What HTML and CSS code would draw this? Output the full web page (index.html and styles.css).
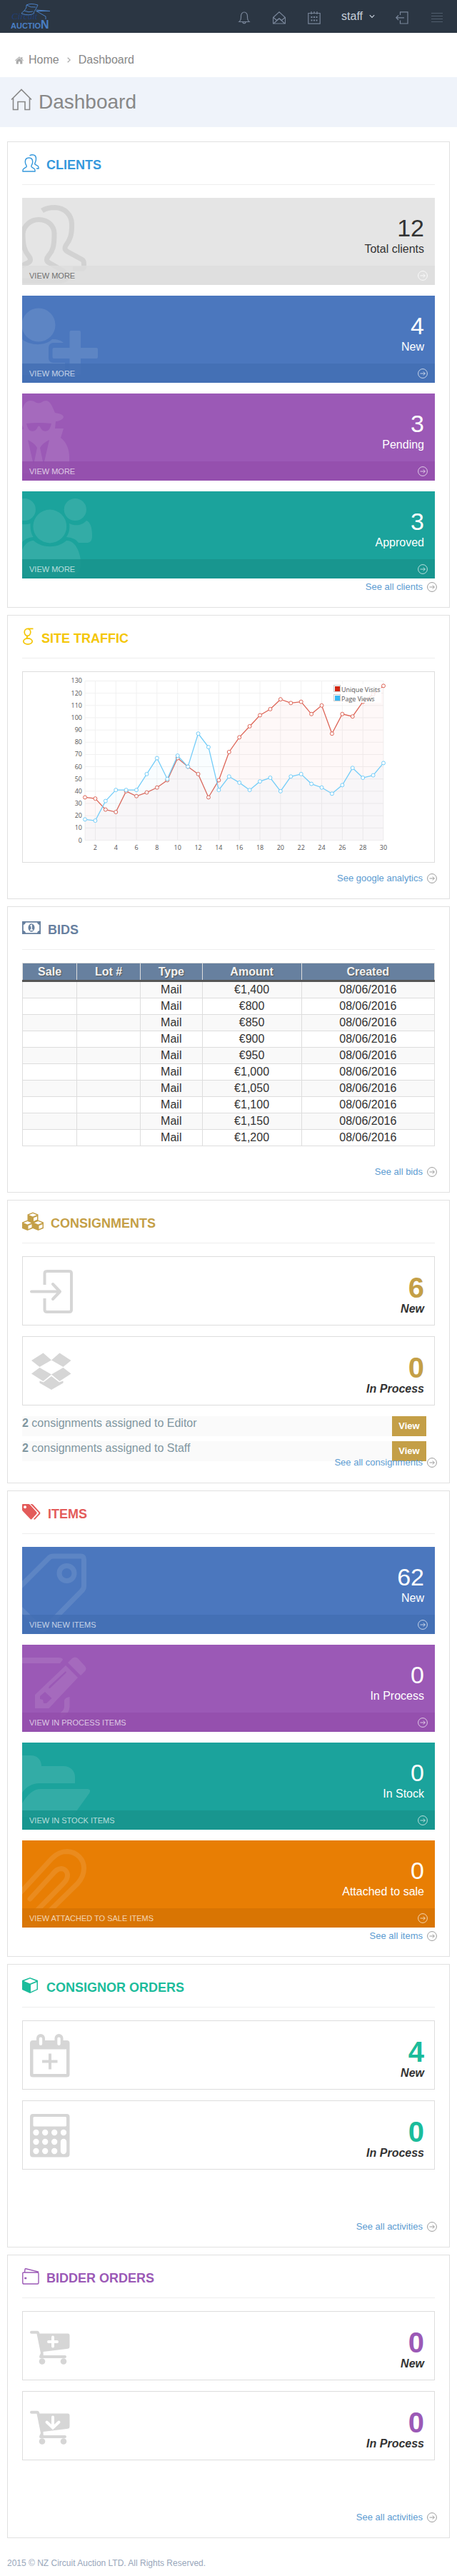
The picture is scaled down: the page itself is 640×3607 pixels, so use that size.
FILE: index.html
```html
<!DOCTYPE html>
<html lang="en">
<head>
<meta charset="utf-8">
<meta name="viewport" content="width=device-width, initial-scale=1">
<title>Dashboard</title>
<link rel="stylesheet" href="styles.css">
</head>
<body>
<svg class="sprite" aria-hidden="true">
  <symbol id="arrow" viewBox="0 0 14 14"><g fill="none" stroke="currentColor"><circle cx="7" cy="7" r="6.4"/><path d="M3.5 7h6.7M7.8 4.5 10.3 7 7.8 9.5"/></g></symbol>
  <symbol id="cart" viewBox="0 0 60 61"><path d="M2 8.7H10Q13 8.7 13.4 12.5H53Q55.5 12.5 55.5 15V31Q55.5 33.5 53 33.8L18.5 38 18.8 43H49A2 2 0 0 1 49 47H15Q12.500 47 13.200 44L15 40 9.500 12.700H2A2 2 0 0 1 2 8.700Z"/><circle cx="17" cy="51.500" r="4.300"/><circle cx="47" cy="51.500" r="4.300"/></symbol>
</svg>

<header class="topbar">
  <a class="logo" href="#" aria-label="Circuit Auction">
    <svg width="58" height="38" viewBox="0 0 58 38">
      <g fill="none" stroke="#4a7fc4" stroke-linejoin="round">
        <path d="M22 3Q28 0 38 3L35 9Q31 14 33 14.500Q26 19 15 15Q16 13 19 11Q23 7 22 3ZM22 3Q28 7 35 6M19 11Q25 14 31 12"/>
        <path d="M36 10 55 11.500 37 11.500M35 11 49 19V23"/>
      </g>
      <text class="logo-script" x="1" y="23">Circuit</text>
      <text class="logo-word" x="0" y="36">AUCTIO</text>
      <text class="logo-word logo-last" x="42" y="36">N</text>
    </svg>
  </a>
  <nav class="topnav" aria-label="Account">
    <button class="icon-btn" aria-label="Notifications"><svg width="18" height="18" viewBox="0 0 18 18"><path d="M2 14.500Q4.500 12.500 4.500 9V6.500A4.500 5.500 0 0 1 13.500 6.500V9Q13.500 12.500 16 14.500ZM7 14.700A2 2 0 0 0 11 14.700"/></svg></button>
    <button class="icon-btn" aria-label="Inbox"><svg width="18" height="18" viewBox="0 0 18 18"><path d="M.5 8.500 9 .8 17.500 8.500V17H.5ZM1 8.500 5.500 12.500M17 8.500 12.500 12.500M1 17 9 10 17 17M5.500 12.500 9 9.800 12.500 12.500"/></svg></button>
    <button class="icon-btn" aria-label="Calendar"><svg width="18" height="18" viewBox="0 0 18 18"><path d="M.8 2.500H17.200V17.200H.8ZM5 0V4M13 0V4M9 0V3"/><path class="dots" d="M4.500 8H6.500M8 8H10M11.500 8H13.500M4.500 12.500H6.500M8 12.500H10M11.500 12.500H13.500"/></svg></button>
    <button class="user-btn">staff <svg width="8" height="6" viewBox="0 0 8 6"><path d="M.8 1.200 4 4.500 7.200 1.200"/></svg></button>
    <button class="icon-btn" aria-label="Log out"><svg width="18" height="18" viewBox="0 0 18 18"><path d="M6.500 5V.8H17V17H6.500V12.500M.8 8.800H12M4 5.500.8 8.800 4 12"/></svg></button>
    <button class="icon-btn menu-btn" aria-label="Menu"><svg width="18" height="18" viewBox="0 0 18 18"><path d="M1 2.500H17M1 6.500H17M1 10.500H17M1 14.500H17"/></svg></button>
  </nav>
</header>

<nav class="crumbs" aria-label="Breadcrumb">
  <svg class="crumb-home" width="12" height="11" viewBox="0 0 12 11"><path d="M6 2.200 10.300 6V10.500H7.200V7.300H4.800V10.500H1.700V6ZM6 .3 8.800 2.600V1H10.300V4L12 5.500 11.400 6.200 6 1.600.6 6.200 0 5.500Z"/></svg>
  <a href="#">Home</a>
  <svg class="crumb-sep" width="5" height="8" viewBox="0 0 5 8"><path d="M.7.700 4.200 4 .7 7.300"/></svg>
  <a href="#">Dashboard</a>
</nav>

<div class="page-head">
  <svg width="30" height="31" viewBox="0 0 30 31"><path d="M1 15.500 15 1.500 29 15.500M3.500 13V29.500H10V18.500H20V29.500H26.500V13"/></svg>
  <h1>Dashboard</h1>
</div>

<main class="cards">
  <section class="card clients">
    <header class="card-head">
      <svg width="24" height="25" viewBox="0 0 24 25"><path class="line" d="M9.500 5C13 5 14.700 7.500 14.700 10.500 14.700 14 13 15 12.800 17 12.800 18.500 18 19.500 18 22V24H1V22C1 19.500 6.500 18.500 6.300 17 6 15 4.300 14 4.300 10.500 4.300 7.500 6 5 9.500 5ZM10.500 2Q12 .8 14.500.8C18 .8 19.500 3.500 19.500 6.500 19.500 10 18 11.500 17.700 13.500 17.500 15 23 15.500 23 18V20H20"/></svg>
      <h2>Clients</h2>
    </header>
    <div class="tiles">
      <article class="tile gray">
        <svg class="tile-art outline" width="120" height="122" viewBox="0 0 120 122"><path d="M28 18C34 14 40 13.500 46 13.500 60 14 69 24 69.500 36 70 52 67 59 61 67 59 71 60 73 63 75L84 86.500Q86.500 88 86.500 92V98Q86 99.500 82 99.500H71M-10 116H55Q61 116 62 113 63 106 57 102L38 91C34 89 33 86 37 81 43 74 45 68 45 50 45 40 37 30.500 23 30.500 12 30.500 2 39 1 50 1 66 3 74 9 81 13 86 12 89 8 91L-6 98"/></svg>
        <div class="tile-body"><strong>12</strong><span>Total clients</span></div>
        <a class="tile-more" href="#">View more <svg><use href="#arrow"/></svg></a>
      </article>
      <article class="tile blue">
        <svg class="tile-art" width="120" height="122" viewBox="0 0 120 122"><circle cx="23" cy="41" r="23.500"/><path d="M0 61C10 70 32 71 42 61 50 61 55 63 58 66H43Q37 67 37 73V87Q37 94 44 94H60V111H0Z"/><path d="M68.500 49H80Q82 49 82 51V73H104Q106 73 106 75V86Q106 88 104 88H82V109Q82 111 80 111H68.500Q66.500 111 66.500 109V88H44.500Q42.500 88 42.500 86V75Q42.500 73 44.500 73H66.500V51Q66.500 49 68.500 49Z"/></svg>
        <div class="tile-body"><strong>4</strong><span>New</span></div>
        <a class="tile-more" href="#">View more <svg><use href="#arrow"/></svg></a>
      </article>
      <article class="tile purple">
        <svg class="tile-art" width="120" height="122" viewBox="0 0 120 122"><path fill-rule="evenodd" d="M0 22C3 14 6 10 12 10 17 10 19 13.500 23 13.500 27 13.500 29 10 34 10 40 11 43 20 46 27 53 28 58 30 58 33 57 37 50 39 47 39L46 49H58L54 62C62 68 66 78 66 89V107Q66 112 61 112H0V51L2 49 0 44ZM6 42Q23 40 41 42 39 52 34 52.500 28 54 25 46.500 23.500 44.500 22 46.500 19 54 13 52.500 8 52 6 42ZM8 65Q17 69 21 76L16 100ZM38 65Q29 69 25 76L30 100Z"/></svg>
        <div class="tile-body"><strong>3</strong><span>Pending</span></div>
        <a class="tile-more" href="#">View more <svg><use href="#arrow"/></svg></a>
      </article>
      <article class="tile teal">
        <svg class="tile-art" width="120" height="122" viewBox="0 0 120 122"><circle cx="38.800" cy="49" r="23.400"/><circle cx="74.300" cy="25.500" r="15.600"/><circle cx="3.300" cy="25.500" r="15.600"/><path d="M66 45C74 49 84 48 90 41 96 43 98 52 98 62 98 70 95 72 90 72H79C74 66 70 65 62 64 66 58 67 52 66 45ZM0 46Q6 47 11.600 45 11 57 15.600 64 5 65 0 71ZM0 82C3 74 10 69 16 69 28 80 50 80 62 69 74 68 81 85 82 97V104Q80 119 66 119H12Q2 119 0 114Z"/></svg>
        <div class="tile-body"><strong>3</strong><span>Approved</span></div>
        <a class="tile-more" href="#">View more <svg><use href="#arrow"/></svg></a>
      </article>
    </div>
    <a class="see-all" href="#">See all clients <svg><use href="#arrow"/></svg></a>
  </section>

  <section class="card traffic">
    <header class="card-head">
      <svg width="17" height="24" viewBox="0 0 17 24"><g fill="none" stroke="currentColor" stroke-width="1.700"><ellipse cx="7.500" cy="6.300" rx="4.300" ry="5"/><path d="M8 1.300H15.500M8.500 11.200C5.500 12.800 6 14.300 9.500 15.300"/><ellipse cx="8" cy="19" rx="6.200" ry="4.100"/></g></svg>
      <h2>Site traffic</h2>
    </header>
    <figure class="chart">
      <svg id="traffic-chart" viewBox="0 0 576 266" role="img" aria-label="Unique visits and page views by day"></svg>
    </figure>
    <a class="see-all" href="#">See google analytics <svg><use href="#arrow"/></svg></a>
  </section>

  <section class="card bids">
    <header class="card-head">
      <svg width="26" height="18" viewBox="0 0 26 18"><path fill-rule="evenodd" d="M0 0H26V18H0ZM5 1.800Q4.500 4.500 1.800 5V13Q4.500 13.500 5 16.200H21Q21.500 13.500 24.200 13V5Q21.500 4.500 21 1.800Z"/><ellipse cx="13" cy="9" rx="4.500" ry="5.800"/><path fill="none" stroke="#fff" stroke-width="1.500" d="M11.300 6.700 13.200 5.500V12M11 12.200H15.300"/></svg>
      <h2>Bids</h2>
    </header>
    <table class="bids-table">
      <colgroup><col class="c-sale"><col class="c-lot"><col class="c-type"><col class="c-amount"><col class="c-created"></colgroup>
      <thead><tr><th>Sale</th><th>Lot #</th><th>Type</th><th>Amount</th><th>Created</th></tr></thead>
      <tbody>
        <tr><td></td><td></td><td>Mail</td><td>€1,400</td><td>08/06/2016</td></tr>
        <tr><td></td><td></td><td>Mail</td><td>€800</td><td>08/06/2016</td></tr>
        <tr><td></td><td></td><td>Mail</td><td>€850</td><td>08/06/2016</td></tr>
        <tr><td></td><td></td><td>Mail</td><td>€900</td><td>08/06/2016</td></tr>
        <tr><td></td><td></td><td>Mail</td><td>€950</td><td>08/06/2016</td></tr>
        <tr><td></td><td></td><td>Mail</td><td>€1,000</td><td>08/06/2016</td></tr>
        <tr><td></td><td></td><td>Mail</td><td>€1,050</td><td>08/06/2016</td></tr>
        <tr><td></td><td></td><td>Mail</td><td>€1,100</td><td>08/06/2016</td></tr>
        <tr><td></td><td></td><td>Mail</td><td>€1,150</td><td>08/06/2016</td></tr>
        <tr><td></td><td></td><td>Mail</td><td>€1,200</td><td>08/06/2016</td></tr>
      </tbody>
    </table>
    <a class="see-all" href="#">See all bids <svg><use href="#arrow"/></svg></a>
  </section>

  <section class="card consignments">
    <header class="card-head">
      <svg width="30" height="26" viewBox="0 0 30 26"><path d="M15 .5 22.500 3.500V12L15 15.500 7.500 12V3.500ZM7.500 11.500 15 14.500V23L7.500 26 0 23V14.500ZM22.500 11.500 30 14.500V23L22.500 26 15 23V14.500Z"/><path fill="#fff" d="M15 2 20.500 4.300 15 6.500 9.500 4.300ZM16 8.200 21 6.200V10.800L16 13ZM7.500 13 13 15.300 7.500 17.500 2 15.300ZM8.500 19.200 13.500 17.200V21.800L8.500 24ZM22.500 13 28 15.300 22.500 17.500 17 15.300ZM23.500 19.200 28.500 17.200V21.800L23.500 24Z"/></svg>
      <h2>Consignments</h2>
    </header>
    <div class="tiles">
      <article class="stat">
        <svg width="60" height="61" viewBox="0 0 60 61"><path class="stroke4" d="M20.500 21V5Q20.500 2 24 2H55Q58 2 58 5V56Q58 59 55 59H24Q20.500 59 20.500 56V40"/><path class="stroke4 round" d="M2 30.500H42M32 20 42 30.500 32 41"/></svg>
        <div><strong>6</strong><em>New</em></div>
      </article>
      <article class="stat">
        <svg width="60" height="61" viewBox="0 0 60 61"><path d="M18.500 4.500 30 14.500 13.500 24 2 15ZM41.500 4.500 57.500 15 46.500 24 30 14.500ZM13.500 25 30 34.500 18.500 44 2 33.500ZM46.500 25 57.500 33.500 41.500 44 30 34.500ZM30 37 41 45.500 46.500 43.500V46.500L30 56 13.500 46.500V43.500L19 45.500Z"/></svg>
        <div><strong>0</strong><em>In Process</em></div>
      </article>
    </div>
    <ul class="assigned">
      <li><p><b>2</b> consignments assigned to Editor</p><button>View</button></li>
      <li><p><b>2</b> consignments assigned to Staff</p><button>View</button></li>
    </ul>
    <a class="see-all" href="#">See all consignments <svg><use href="#arrow"/></svg></a>
  </section>

  <section class="card items">
    <header class="card-head">
      <svg width="26" height="22" viewBox="0 0 26 22"><path fill-rule="evenodd" d="M0 1Q0 0 1 0H9Q10 0 11 1L20 11Q21.500 12.500 20 14L13.500 21Q12.500 22 11.500 21L1 10Q0 9 0 8ZM4 2.200A2 2 0 1 0 4.100 2.200Z"/><path d="M11.500 0H13.500Q14.500 0 15.500 1L25 11.500Q26 12.800 25 14L18 21.500Q17 22 16 21L23 13.500Q23.700 12.800 23 12Z"/></svg>
      <h2>Items</h2>
    </header>
    <div class="tiles">
      <article class="tile blue">
        <svg class="tile-art outline" width="120" height="122" viewBox="0 0 120 122"><path d="M-4 57 38 15Q40 13 44 13H82Q86.500 13 86.500 18V55Q86.500 59 83 62L32 114Q29 117 26 114L-4 85"/><circle cx="62.500" cy="37" r="10.500"/></svg>
        <div class="tile-body"><strong>62</strong><span>New</span></div>
        <a class="tile-more" href="#">View new items <svg><use href="#arrow"/></svg></a>
      </article>
      <article class="tile purple">
        <svg class="tile-art" width="120" height="122" viewBox="0 0 120 122"><path fill-rule="evenodd" d="M0 18H50Q57 18 57 21L53 26H0ZM64 25 70 19Q74 16 78 19L88 30Q91 34 88 37L82 43ZM61 29 78 46 37.500 89H18V70ZM32 66 25 72V76L29 77 30 82H34L41.500 75ZM38 58 61 37 62 39 39 61 37 61ZM66.500 73Q60 74 59 78V86Q59 92 53.500 95V103Q66 98 66.500 87Z"/></svg>
        <div class="tile-body"><strong>0</strong><span>In Process</span></div>
        <a class="tile-more" href="#">View in process items <svg><use href="#arrow"/></svg></a>
      </article>
      <article class="tile teal">
        <svg class="tile-art" width="120" height="122" viewBox="0 0 120 122"><path d="M0 18H12C21 18 27 24 27 33H58C68 33 74 40 74 48V57H24C14 57 6 62 0 70ZM0 85C8 72 16 65 26 65H92Q97 66 94 71L76 96Q70 104 60 104H0Z"/></svg>
        <div class="tile-body"><strong>0</strong><span>In Stock</span></div>
        <a class="tile-more" href="#">View in stock items <svg><use href="#arrow"/></svg></a>
      </article>
      <article class="tile orange">
        <svg class="tile-art outline" width="120" height="122" viewBox="0 0 120 122"><path d="M-4 75 42 25C50 17 56 15.500 63 15.500 77 16 86.500 27 86.500 39 86.500 47 84 53 78 60L25 112C18 119 8 119 2 114"/><path class="round" d="M11 82 42 48C47 42 50 39.500 55 39.500 60 40 63.500 44 63.500 49 63.500 53 61 57 58 60L18 101"/></svg>
        <div class="tile-body"><strong>0</strong><span>Attached to sale</span></div>
        <a class="tile-more" href="#">View attached to sale items <svg><use href="#arrow"/></svg></a>
      </article>
    </div>
    <a class="see-all" href="#">See all items <svg><use href="#arrow"/></svg></a>
  </section>

  <section class="card consignor">
    <header class="card-head">
      <svg width="24" height="22" viewBox="0 0 24 22"><path fill-rule="evenodd" d="M11 0 22 4V17L11 22 0 17V4ZM11 1.500 2.500 5 11 8.500 19.500 5ZM12 10V20L20.500 16.200V6.500Z"/></svg>
      <h2>Consignor orders</h2>
    </header>
    <div class="tiles">
      <article class="stat">
        <svg width="60" height="61" viewBox="0 0 60 61"><path fill-rule="evenodd" d="M4 9H9V6A6 6 0 0 1 21 6V9H34.500V6A6 6 0 0 1 46.500 6V9H51.500Q55.500 9 55.500 13V57Q55.500 60.500 51.500 60.500H4Q0 60.500 0 57V13Q0 9 4 9ZM4.500 21.500V56H51V21.500ZM12.800 6.500V14Q12.800 16 15 16T17.200 14V6.500Q17.200 4.500 15 4.500T12.800 6.500ZM38.300 6.500V14Q38.300 16 40.500 16T42.700 14V6.500Q42.700 4.500 40.500 4.500T38.300 6.500Z"/><path class="stroke4" d="M17 38.500H38.500M28 27.500V49.500"/></svg>
        <div><strong>4</strong><em>New</em></div>
      </article>
      <article class="stat">
        <svg width="60" height="61" viewBox="0 0 60 61"><rect width="55.500" height="60.500" rx="4"/><g fill="#fff"><rect x="4.500" y="4" width="46.500" height="13.500" rx="1.500"/><circle cx="8.500" cy="26" r="4.200"/><circle cx="21.200" cy="26" r="4.200"/><circle cx="34.200" cy="26" r="4.200"/><circle cx="47" cy="26" r="4.200"/><circle cx="8.500" cy="39" r="4.200"/><circle cx="21.200" cy="39" r="4.200"/><circle cx="34.200" cy="39" r="4.200"/><circle cx="8.500" cy="52" r="4.200"/><circle cx="21.200" cy="52" r="4.200"/><circle cx="34.200" cy="52" r="4.200"/><rect x="42.800" y="34.800" width="8.400" height="21.400" rx="4.200"/></g></svg>
        <div><strong>0</strong><em>In Process</em></div>
      </article>
    </div>
    <a class="see-all" href="#">See all activities <svg><use href="#arrow"/></svg></a>
  </section>

  <section class="card bidder">
    <header class="card-head">
      <svg width="24" height="23" viewBox="0 0 24 23"><path class="line" d="M2 6H21.500Q23 6 23 7.500V20.500Q23 22 21.500 22H2.500Q.8 22 .8 20.500V7Q.8 6 2 6ZM3.500 6 4 1.500Q4.200.5 5.200.7L22.500 5V7M4 13.500H5.500V14.500H4Z"/></svg>
      <h2>Bidder orders</h2>
    </header>
    <div class="tiles">
      <article class="stat">
        <svg width="60" height="61" viewBox="0 0 60 61"><use href="#cart"/><path class="cut" d="M26 24H38M32 17.500V30.500"/></svg>
        <div><strong>0</strong><em>New</em></div>
      </article>
      <article class="stat">
        <svg width="60" height="61" viewBox="0 0 60 61"><use href="#cart"/><path class="cut" d="M32 17.500V32M23.500 24.500 32 32.500 40.500 24.500"/></svg>
        <div><strong>0</strong><em>In Process</em></div>
      </article>
    </div>
    <a class="see-all" href="#">See all activities <svg><use href="#arrow"/></svg></a>
  </section>
</main>

<footer class="page-foot">2015 © NZ Circuit Auction LTD. All Rights Reserved.</footer>
<script src="chart.js"></script>
</body>
</html>
```

FILE: styles.css
```css
* { box-sizing: border-box; }

body {
  margin: 0;
  background: #fff;
  color: #333;
  font: 16px/20px "Liberation Sans", Arial, sans-serif;
}

h1, h2, p, figure, ul { margin: 0; padding: 0; }
a { color: inherit; text-decoration: none; }
button { border: 0; padding: 0; background: none; color: inherit; font: inherit; }
svg { display: block; flex: none; }
.sprite { position: absolute; width: 0; height: 0; }

/* Top bar */
.topbar {
  display: flex;
  justify-content: space-between;
  height: 46px;
  padding: 0 19px 0 15px;
  background: #2b3643;
}
.logo { padding-top: 4px; }
.logo svg { overflow: visible; }
.logo-script { fill: #213f78; font: italic 13px "Liberation Serif", serif; }
.logo-word { fill: #4a7fc4; font: bold 11px "Liberation Sans", sans-serif; }
.logo-last { font-size: 16px; }
.topnav { display: flex; align-items: center; gap: 31px; color: #79869a; }
.topnav svg { fill: none; stroke: currentColor; stroke-width: 1.2; }
.icon-btn { padding-top: 4px; }
.topnav .dots { stroke-width: 2; }
.topnav .menu-btn { color: #4f5c6c; }
.user-btn {
  display: flex;
  align-items: center;
  gap: 9px;
  margin: 0 -2px;
  color: #c6cfda;
}

/* Breadcrumb and page title */
.crumbs {
  display: flex;
  align-items: center;
  height: 62px;
  padding: 14px 21px 0;
  color: #888;
}
.crumb-home { margin-right: 7px; fill: #aaa; }
.crumb-sep { margin: 0 11px; fill: none; stroke: #aaa; stroke-width: 1.2; }
.page-head {
  display: flex;
  align-items: center;
  gap: 9px;
  height: 70px;
  padding: 0 15px 8px;
  background: #eff3fa;
  color: #888;
}
.page-head svg { fill: none; stroke: currentColor; stroke-width: 1.6; }
.page-head h1 { padding-top: 8px; font-size: 28px; line-height: 32px; font-weight: normal; }

/* Cards */
.cards { display: flex; flex-direction: column; gap: 10px; padding: 20px 10px 0; }
.card {
  display: flex;
  flex-direction: column;
  min-height: 397px;
  padding: 14px 20px 17px;
  border: 1px solid #e1e1e1;
}
.card-head {
  display: flex;
  align-items: center;
  gap: 10px;
  height: 46px;
  margin-bottom: 18px;
  padding-bottom: 15px;
  border-bottom: 1px solid #eee;
  color: var(--accent);
}
.card-head svg { fill: currentColor; }
.card-head .line { fill: none; stroke: currentColor; stroke-width: 1.4; }
.card-head h2 { padding-top: 6px; font-size: 18px; line-height: 24px; text-transform: uppercase; }

.clients { --accent: #3598dc; }
.traffic { --accent: #f4c606; }
.bids { --accent: #67809f; }
.consignments { --accent: #c49f47; }
.items { --accent: #e35b5a; }
.consignor { --accent: #1bbc9b; }
.bidder { --accent: #9b59b6; }

.see-all {
  display: flex;
  align-items: center;
  align-self: flex-end;
  gap: 6px;
  height: 23px;
  margin: auto -3px 0 0;
  color: #5b9bd1;
  font-size: 13px;
  z-index: 1;
}
.see-all svg { width: 14px; height: 14px; color: #999; }

/* Coloured tiles */
.tiles { display: flex; flex-direction: column; gap: 15px; }
.tile {
  position: relative;
  display: flex;
  flex-direction: column;
  height: 122px;
  overflow: hidden;
  background: var(--tile);
  color: #fff;
}
.tile-art { position: absolute; left: 0; top: 0; fill: #fff; opacity: 0.1; }
.tile-art.outline { fill: none; stroke: #fff; stroke-width: 7; }
.round { stroke-linecap: round; stroke-linejoin: round; }
.tile-body {
  display: flex;
  flex: 1;
  flex-direction: column;
  align-items: flex-end;
  padding: 24px 15px 0;
}
.tile-body strong { font-size: 34px; line-height: 36px; font-weight: normal; }
.tile-body span { padding-top: 2px; }
.tile-more {
  position: relative;
  display: flex;
  align-items: center;
  justify-content: space-between;
  height: 27px;
  padding: 0 10px;
  background: var(--tile-foot);
  color: rgba(255, 255, 255, 0.7);
  font-size: 11px;
  text-transform: uppercase;
}
.tile-more svg { width: 14px; height: 14px; }
.gray { --tile: #e5e5e5; --tile-foot: rgba(221, 221, 221, 0.8); color: #333; }
.gray .tile-art { stroke: #000; opacity: 0.08; }
.gray .tile-more { color: #707070; }
.gray .tile-more svg { color: #fafafa; }
.blue { --tile: #4b77be; --tile-foot: rgba(67, 110, 180, 0.85); }
.purple { --tile: #9b59b6; --tile-foot: rgba(148, 79, 173, 0.85); }
.teal { --tile: #1ba39c; --tile-foot: rgba(24, 148, 141, 0.85); }
.orange { --tile: #e87e04; --tile-foot: rgba(214, 115, 3, 0.85); }

/* Chart */
.chart { margin-bottom: 10px; border: 1px solid #ddd; }
.chart svg { width: 100%; font: 9px "Open Sans", sans-serif; fill: #545454; }

/* Bids */
.bids-table {
  width: 100%;
  margin-bottom: 24px;
  border-collapse: collapse;
  table-layout: fixed;
  text-align: center;
}
.c-sale { width: 13.2%; }
.c-lot { width: 15.4%; }
.c-type { width: 15%; }
.c-amount { width: 24.1%; }
.bids-table th, .bids-table td { height: 23px; padding: 0; border: 1px solid #ddd; line-height: 22px; }
.bids-table th {
  height: 25px;
  border-bottom: 3px solid #555;
  background: #67809f;
  color: #f2f2f2;
  text-shadow: 1px 1px 1px #555;
}
.bids-table tbody tr:nth-child(odd) { background: #f9f9f9; }

/* Outlined counters */
.stat {
  display: flex;
  justify-content: space-between;
  height: 97px;
  padding: 18px 14px 0 10px;
  border: 1px solid #ddd;
}
.stat svg { fill: #d6d6d6; }
.stat .stroke4 { fill: none; stroke: #d6d6d6; stroke-width: 4; }
.stat .cut { fill: none; stroke: #fff; stroke-width: 4; stroke-linecap: round; }
.stat div { display: flex; flex-direction: column; align-items: flex-end; padding-top: 5px; }
.stat strong { color: var(--accent); font-size: 40px; line-height: 40px; }
.stat em { font-weight: bold; }

/* Assigned list */
.assigned {
  display: flex;
  flex-direction: column;
  gap: 7px;
  margin: 15px 12px -10px 0;
  list-style: none;
}
.assigned li { display: flex; justify-content: space-between; height: 28px; background: #fafafa; color: #8096a0; }
.assigned button { width: 48px; background: #c49f47; color: #fff; font-size: 13px; font-weight: bold; }

.page-foot { padding: 25px 10px 7px; color: #98a6ba; font-size: 12px; }
```

FILE: chart.js
```js
const NS = "http://www.w3.org/2000/svg";
const chart = document.getElementById("traffic-chart");
const left = 87, right = 505, bottom = 235.5, unit = 1.7154;
const visits = [35, 34, 25, 23, 40, 36, 39, 43, 49, 67, 60, 54, 35, 49, 72, 84, 93, 102, 107, 115, 112, 113, 103, 110, 87, 103, 101, 113, 119, 126];
const views = [17, 16, 32, 41, 41, 41, 54, 67, 50, 69, 60, 87, 76, 41, 52, 47, 41, 48, 51, 40, 52, 54, 46, 43, 38, 45, 59, 51, 53, 63];
const x = day => left + (day - 1) * (right - left) / 29;
const y = value => bottom - value * unit;

function add(name, attrs, text) {
  const node = document.createElementNS(NS, name);
  for (const key in attrs) node.setAttribute(key, attrs[key]);
  if (text !== undefined) node.textContent = text;
  chart.appendChild(node);
}

for (let v = 0; v <= 130; v += 10) {
  add("path", { d: `M${left} ${y(v)}H${right}`, stroke: "#f1f1f1" });
  add("text", { x: 83, y: y(v) + 3, "text-anchor": "end" }, v);
}
add("path", { d: `M${left} ${y(0)}V${y(130)}`, stroke: "#f1f1f1" });
for (let day = 2; day <= 30; day += 2) {
  add("path", { d: `M${x(day)} ${y(0)}V${y(130)}`, stroke: "#f1f1f1" });
  add("text", { x: x(day), y: 249, "text-anchor": "middle" }, day);
}

function series(values, color) {
  const line = values.map((v, i) => `${x(i + 1)} ${y(v)}`).join("L");
  add("path", { d: `M${line}V${bottom}H${left}Z`, fill: color, "fill-opacity": 0.045 });
  add("path", { d: `M${line}`, fill: "none", stroke: color, "stroke-width": 1.3 });
  values.forEach((v, i) => add("circle", { cx: x(i + 1), cy: y(v), r: 2.5, fill: "#fff", stroke: color }));
}
series(visits, "#dd6456");
series(views, "#74cdf8");

add("rect", { x: 434, y: 17, width: 68, height: 26, fill: "#fff", "fill-opacity": 0.85 });
[["Unique Visits", "#d12610", 18.5], ["Page Views", "#37b7f3", 31.5]].forEach(([label, color, top]) => {
  add("rect", { x: 435.5, y: top, width: 9, height: 9, fill: "#fff", stroke: "#ccc" });
  add("rect", { x: 437, y: top + 1.5, width: 7, height: 7, fill: color });
  add("text", { x: 446, y: top + 9 }, label);
});
```
